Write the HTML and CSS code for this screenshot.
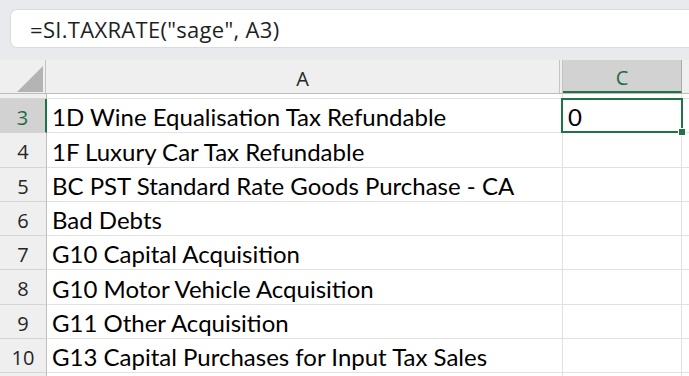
FILE: index.html
```html
<!DOCTYPE html>
<html>
<head>
<meta charset="utf-8">
<link rel="stylesheet" href="styles.css">
</head>
<body>
<div class="app">
  <div class="formula-area">
    <div class="formula-box">=SI.TAXRATE("sage", A3)</div>
  </div>
  <div class="sheet">
    <div class="hrow">
      <div class="corner"><span class="tri"></span></div>
      <div class="colhead col-a">A</div>
      <div class="colhead col-b"></div>
      <div class="colhead col-c sel">C</div>
      <div class="colhead col-d"></div>
    </div>
    <div class="row partial-top">
      <div class="rowhead"></div>
      <div class="cell ca"></div>
      <div class="cell cc"></div>
      <div class="cell cd"></div>
    </div>
    <div class="row">
      <div class="rowhead sel">3</div>
      <div class="cell ca">1D Wine Equalisation Tax Refundable</div>
      <div class="cell cc active">0<span class="handle"></span></div>
      <div class="cell cd"></div>
    </div>
    <div class="row">
      <div class="rowhead">4</div>
      <div class="cell ca">1F Luxury Car Tax Refundable</div>
      <div class="cell cc"></div>
      <div class="cell cd"></div>
    </div>
    <div class="row">
      <div class="rowhead">5</div>
      <div class="cell ca">BC PST Standard Rate Goods Purchase - CA</div>
      <div class="cell cc"></div>
      <div class="cell cd"></div>
    </div>
    <div class="row">
      <div class="rowhead">6</div>
      <div class="cell ca">Bad Debts</div>
      <div class="cell cc"></div>
      <div class="cell cd"></div>
    </div>
    <div class="row">
      <div class="rowhead">7</div>
      <div class="cell ca">G10 Capital Acquisition</div>
      <div class="cell cc"></div>
      <div class="cell cd"></div>
    </div>
    <div class="row">
      <div class="rowhead">8</div>
      <div class="cell ca">G10 Motor Vehicle Acquisition</div>
      <div class="cell cc"></div>
      <div class="cell cd"></div>
    </div>
    <div class="row">
      <div class="rowhead">9</div>
      <div class="cell ca">G11 Other Acquisition</div>
      <div class="cell cc"></div>
      <div class="cell cd"></div>
    </div>
    <div class="row">
      <div class="rowhead">10</div>
      <div class="cell ca">G13 Capital Purchases for Input Tax Sales</div>
      <div class="cell cc"></div>
      <div class="cell cd"></div>
    </div>
    <div class="row">
      <div class="rowhead"></div>
      <div class="cell ca"></div>
      <div class="cell cc"></div>
      <div class="cell cd"></div>
    </div>
  </div>
</div>
</body>
</html>
```
FILE: styles.css
```css
* { box-sizing: border-box; }
html, body { margin: 0; padding: 0; }
body {
  width: 689px;
  height: 376px;
  overflow: hidden;
  background: #ffffff;
}
.app {
  width: 689px;
  height: 376px;
  overflow: hidden;
  display: flex;
  flex-direction: column;
}
.formula-area {
  background: #e8eaed;
  padding: 9px 0 12px 10px;
  flex: none;
}
.formula-box {
  height: 39px;
  background: #ffffff;
  border: 1px solid #d9dbdf;
  border-right: none;
  border-radius: 7px 0 0 7px;
  padding-left: 19px;
  display: flex;
  align-items: center;
  font-family: "Open Sans", "Noto Sans", sans-serif;
  font-size: 22px;
  color: #1f1f1f;
  letter-spacing: 0.3px;
}
.sheet {
  flex: 1;
  display: flex;
  flex-direction: column;
}
.hrow {
  display: flex;
  height: 34px;
  flex: none;
  background: #efefef;
  border-bottom: 1px solid #bdbdbd;
}
.corner {
  width: 46px;
  border-right: 1px solid #c4c4c4;
  display: flex;
  align-items: flex-end;
  justify-content: flex-end;
  padding: 0 2px 1px 0;
}
.tri {
  width: 26px;
  height: 26px;
  background: #b4b4b4;
  clip-path: polygon(100% 0, 100% 100%, 0 100%);
}
.colhead {
  display: flex;
  align-items: center;
  justify-content: center;
  font-family: "Open Sans", "Noto Sans", sans-serif;
  font-size: 20px;
  color: #262626;
  border-right: 1px solid #c4c4c4;
  padding-top: 4px;
}
.col-a { width: 514px; }
.col-b { width: 3px; }
.col-c { width: 119px; }
.col-d { flex: 1; border-right: none; }
.colhead.sel {
  background: #d2d2d2;
  color: #1e6b41;
  border-bottom: 2px solid #217346;
  border-right-color: #a9a9a9;
}
.row {
  display: flex;
  height: 34.25px;
  flex: none;
}
.row.partial-top { height: 5px; }
.rowhead {
  width: 47px;
  flex: none;
  background: #efefef;
  border-right: 1px solid #bdbdbd;
  border-bottom: 1px solid #d4d4d4;
  display: flex;
  align-items: center;
  justify-content: center;
  font-family: "Open Sans", "Noto Sans", sans-serif;
  font-size: 20px;
  color: #262626;
  padding-top: 4px;
}
.rowhead.sel {
  background: #d2d2d2;
  color: #1e6b41;
  border-right: 2px solid #217346;
}
.cell {
  border-right: 1px solid #e1e1e1;
  border-bottom: 1px solid #e1e1e1;
  font-family: "Lato", "Noto Sans", sans-serif;
  font-size: 24px;
  line-height: 28px;
  color: #000000;
  display: flex;
  align-items: flex-end;
  padding: 0 0 1px 5px;
  white-space: nowrap;
}
.ca { width: 516px; }
.cc { width: 119px; position: relative; }
.cd { flex: 1; border-right: none; }
.cell.active::after {
  content: "";
  position: absolute;
  left: -2px;
  top: -1px;
  right: -2px;
  bottom: -1px;
  border: 2px solid #217346;
}
.handle {
  position: absolute;
  right: -5px;
  bottom: -4px;
  width: 8px;
  height: 8px;
  background: #217346;
  border: 1px solid #ffffff;
  z-index: 2;
}
```
